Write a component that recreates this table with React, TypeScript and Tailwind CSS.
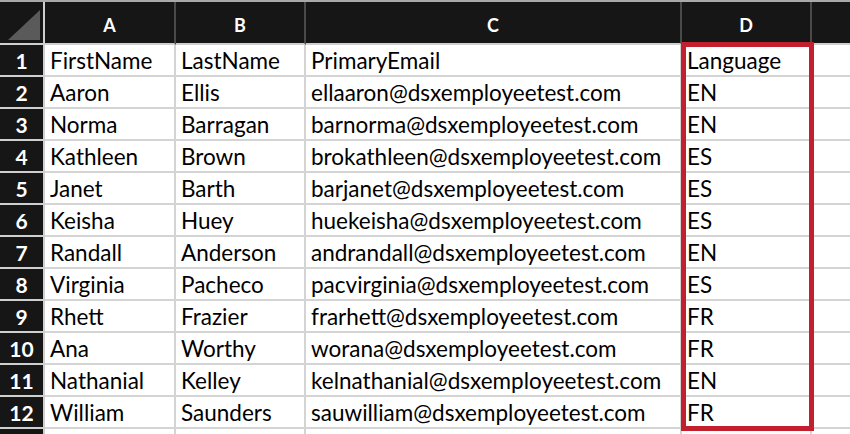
const rows = [
  ['FirstName', 'LastName', 'PrimaryEmail', 'Language'],
  ['Aaron', 'Ellis', 'ellaaron@dsxemployeetest.com', 'EN'],
  ['Norma', 'Barragan', 'barnorma@dsxemployeetest.com', 'EN'],
  ['Kathleen', 'Brown', 'brokathleen@dsxemployeetest.com', 'ES'],
  ['Janet', 'Barth', 'barjanet@dsxemployeetest.com', 'ES'],
  ['Keisha', 'Huey', 'huekeisha@dsxemployeetest.com', 'ES'],
  ['Randall', 'Anderson', 'andrandall@dsxemployeetest.com', 'EN'],
  ['Virginia', 'Pacheco', 'pacvirginia@dsxemployeetest.com', 'ES'],
  ['Rhett', 'Frazier', 'frarhett@dsxemployeetest.com', 'FR'],
  ['Ana', 'Worthy', 'worana@dsxemployeetest.com', 'FR'],
  ['Nathanial', 'Kelley', 'kelnathanial@dsxemployeetest.com', 'EN'],
  ['William', 'Saunders', 'sauwilliam@dsxemployeetest.com', 'FR'],
];

const widths = ['w-[131px]', 'w-[130px]', 'w-[376px]', 'w-[130px]'];

export default function App() {
  return (
    <div className="relative w-[850px] h-[434px] overflow-hidden bg-white font-['Lato',sans-serif] text-[22.5px] leading-none text-black">
      {/* column header row */}
      <div className="flex h-[45px] border-t-2 border-[#a9a9a9] bg-[#161616] text-white font-bold text-[18px]">
        <div className="relative w-[45px] shrink-0 border-r-2 border-b-2 border-r-[#cfcfcf] border-b-[#cfcfcf]">
          <svg className="absolute left-[8px] top-[8px]" width="32" height="30" viewBox="0 0 32 30">
            <polygon points="32,0 32,30 0,30" fill="#5a5a5a" />
          </svg>
        </div>
        {['A', 'B', 'C', 'D'].map((l, i) => (
          <div
            key={l}
            className={`${widths[i]} shrink-0 flex items-center justify-center border-r-2 border-r-[#4a4a4a] border-b-2 border-b-[#cfcfcf] pt-[5px]`}
          >
            {l}
          </div>
        ))}
        <div className="flex-1 border-b-2 border-b-[#cfcfcf]" />
      </div>

      {rows.map((r, ri) => (
        <div key={ri} className="flex h-[32px]">
          <div className="w-[45px] shrink-0 flex items-end justify-center pb-[4px] bg-[#161616] text-white font-bold text-[21px] border-r-2 border-b-2 border-[#cfcfcf]">
            {ri + 1}
          </div>
          {r.map((c, ci) => (
            <div
              key={ci}
              className={`${widths[ci]} shrink-0 flex items-end pl-[5px] pb-[3px] whitespace-nowrap border-r-2 border-b-2 border-[#d4d4d4]`}
            >
              {c}
            </div>
          ))}
          <div className="flex-1 border-b-2 border-[#d4d4d4]" />
        </div>
      ))}

      <div className="flex h-[32px]">
        <div className="w-[45px] shrink-0 bg-[#161616] border-r-2 border-[#cfcfcf]" />
        {widths.map((w, i) => (
          <div key={i} className={`${w} shrink-0 border-r-2 border-[#d4d4d4]`} />
        ))}
      </div>

      {/* highlight around the Language column */}
      <div className="absolute left-[681px] top-[42px] w-[133px] h-[389px] border-[5px] border-[#c3202f]" />
    </div>
  );
}
